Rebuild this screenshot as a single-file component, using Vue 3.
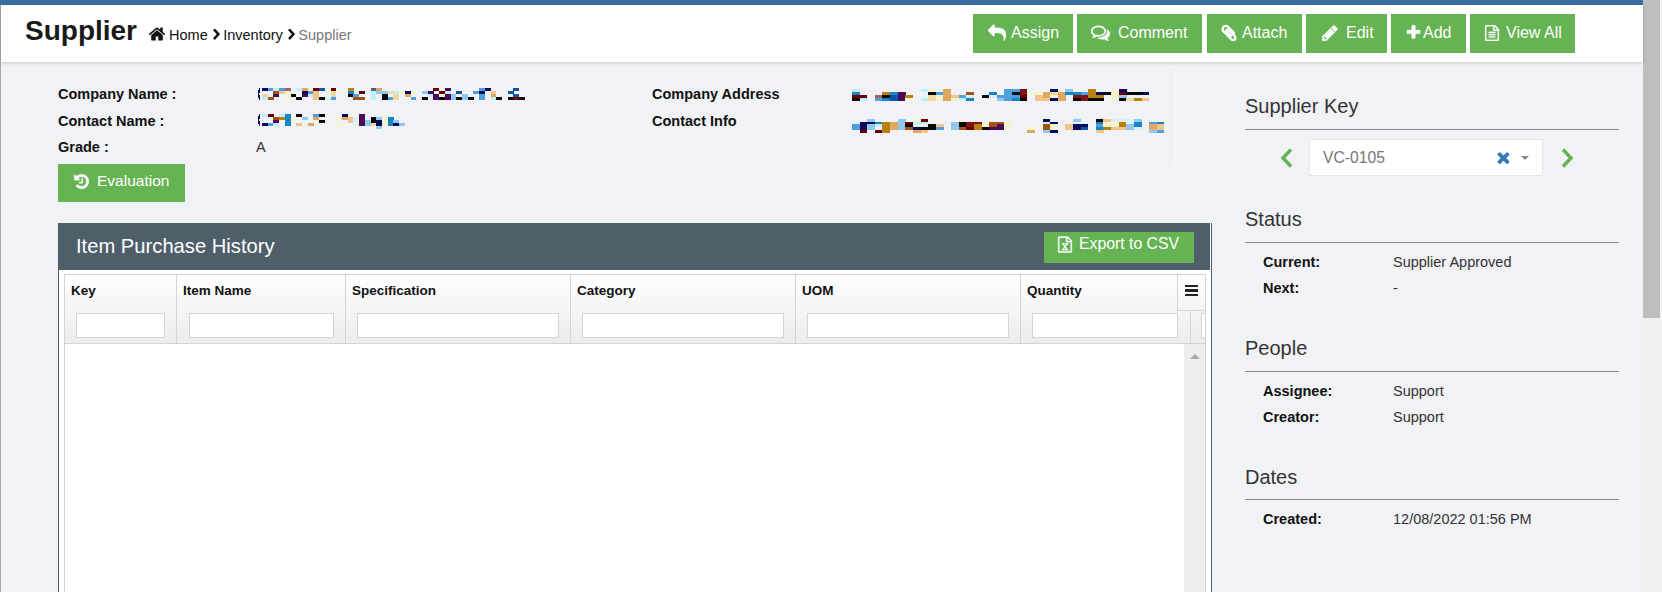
<script setup>
const palette = {
  n: '#0b0b5e', b: '#4f9fe0', c: '#bff0f5', m: '#a56060', o: '#dfa760', y: '#f3f3d0', r: '#6b0000',
  B: '#0b55aa', k: '#b8800f', v: '#5a5a8a', O: '#a5520f', f: '#f0c48a', p: '#4a0b5a', l: '#90c8f0',
  w: '#f0d8a0', t: '#1585c5', x: '#0a0a0a', R: '#7f1515', i: '#dff0f0'
}

function sp(n) { return ' '.repeat(n) }

function mosaic(rows, cw, rh, off, top) {
  const rects = []
  rows.forEach((row, ry) => {
    ;[...row].forEach((ch, cx) => {
      if (ch !== ' ') rects.push({ x: off + cx * cw, y: ry * rh, w: cw + 0.2, h: rh, fill: palette[ch] })
    })
  })
  const width = off + cw * Math.max(...rows.map(r => r.length))
  return { rects, width, height: rows.length * rh, top }
}

const companyName = mosaic([
  'nbcbm coyrB r  k   vo' + sp(9) + 'r p' + sp(5) + 'bn' + sp(4) + 'B',
  '  Ofy  nbf yw  t r cllwcyny lp rc B  bn f  B',
  'w p yx pcf  w  xb  c x w o   cpypl l  b o   B',
  'cO  y x  fxib   OO c xbw  b x pxplxlx b cx xrx'
], 40 / 7, 3, 6, 7)

const contactName = mosaic([
  'cr ct x  bx   n  p',
  '  Okty l o   yofip xlyt',
  '  p ty    x    fiplxnytl',
  'nbc t f o    y  iplwnytnl',
  sp(20) + 'l'
], 40 / 7, 3, 6, 6.5)

const companyAddress = mosaic([
  'c        cy o       bbR   n l  k  yn',
  't   ktp   xbo  O  t bxRyyowottbknxyrxxn',
  'rr mxBpk  wyofbi xibbbr foyo RRkk yl',
  'xc btBpy cwyoyct   lbtx ffno xRxx yxwkf'
], 7.62, 3, 0, 8)

const contactInfo = mosaic([
  '  l   l yr' + sp(15) + 'n' + sp(3) + 'l' + sp(2) + 'xfiiil',
  'inntkolrcc  ilxRRyOOy    cn     tyykit bt',
  'bnlckolxiixf lxRkyOpy    Oy fnn byyklt of',
  'bnl kolOnxxb lOrkxppy  y Oy fnB tkffli of',
  ' r rk   of' + sp(13) + 'o ln' + sp(5) + 'f' + sp(6) + 'lb'
], 7.62, 2.7, 0, 11.5)

const icons = {
  reply: 'M1792 1120q0 166-127 451-3 7-10.5 24t-13.5 30-13 22q-12 17-28 17-15 0-23.5-10t-8.5-25q0-9 2.5-26.5t2.5-23.5q5-68 5-123 0-101-17.5-181t-48.5-138.5-80-101-105.5-69.5-133-42.5-154-21.5-175.5-6h-224v256q0 26-19 45t-45 19-45-19l-512-512q-19-19-19-45t19-45l512-512q19-19 45-19t45 19 19 45v256h224q713 0 875 403 53 134 53 333z',
  comments: 'M704 384q-153 0-286 52t-211.5 141-78.5 191q0 82 53 158t149 132l97 56-35 84q34-20 62-39l44-31 53 10q78 14 153 14 153 0 286-52t211.5-141 78.5-191-78.5-191-211.5-141-286-52zm0-128q191 0 353.5 68.5t256.5 186.5 94 257-94 257-256.5 186.5-353.5 68.5q-86 0-176-16-124 88-278 128-36 9-86 16h-3q-11 0-20.5-8t-11.5-21q-1-3-1-6.5t.5-6.5 2-6l2.5-5 3.5-5.5 4-5 4.5-5 4-4.5q5-6 23-25t26-29.5 22.5-29 25-38.5 20.5-44q-124-72-195-177t-71-224q0-139 94-257t256.5-186.5 353.5-68.5zm822 1169q10 24 20.5 44t25 38.5 22.5 29 26 29.5 23 25q1 1 4 4.5t4.5 5 4 5 3.5 5.5l2.5 5 2 6 .5 6.5-1 6.5q-3 14-13 22t-22 7q-50-7-86-16-154-40-278-128-90 16-176 16-271 0-472-132 58 4 88 4 161 0 309-45t264-129q125-92 192-212t67-254q0-77-23-152 129 71 204 178t75 230q0 120-71 224.5t-195 176.5z',
  paperclip: 'M1596 1385q0 117-79 196t-196 79q-135 0-235-100l-777-776q-113-115-113-271 0-159 110-270t269-111q158 0 273 113l605 606q10 10 10 22 0 16-30.5 46.5t-46.5 30.5q-13 0-23-10l-606-607q-79-77-181-77-106 0-179 75t-73 181q0 105 76 181l776 777q63 63 145 63 64 0 106-42t42-106q0-82-63-145l-581-581q-26-24-60-24-29 0-48 19t-19 48q0 32 25 59l410 410q10 10 10 22 0 16-31 47t-47 31q-12 0-22-10l-410-410q-63-61-63-149 0-82 57-139t139-57q88 0 149 63l581 581q100 98 100 235z',
  pencil: 'M491 1536l91-91-235-235-91 91v107h128v128h107zm523-928q0-22-22-22-10 0-17 7l-542 542q-7 7-7 17 0 22 22 22 10 0 17-7l542-542q7-7 7-17zm-54-192l416 416-832 832h-416v-416zm683 96q0 53-37 90l-166 166-416-416 166-165q36-38 90-38 53 0 91 38l235 234q37 39 37 91z',
  plus: 'M1600 736v192q0 40-28 68t-68 28h-416v416q0 40-28 68t-68 28h-192q-40 0-68-28t-28-68v-416h-416q-40 0-68-28t-28-68v-192q0-40 28-68t68-28h416v-416q0-40 28-68t68-28h192q40 0 68 28t28 68v416h416q40 0 68 28t28 68z',
  file: 'M1596 380q28 28 48 76t20 88v1152q0 40-28 68t-68 28h-1344q-40 0-68-28t-28-68v-1600q0-40 28-68t68-28h896q40 0 88 20t76 48zm-444-244v376h376q-10-29-22-41l-313-313q-12-12-41-22zm384 1528v-1024h-416q-40 0-68-28t-28-68v-416h-768v1536h1280zm-1024-864q0-14 9-23t23-9h704q14 0 23 9t9 23v64q0 14-9 23t-23 9h-704q-14 0-23-9t-9-23v-64zm736 224q14 0 23 9t9 23v64q0 14-9 23t-23 9h-704q-14 0-23-9t-9-23v-64q0-14 9-23t23-9h704zm0 256q14 0 23 9t9 23v64q0 14-9 23t-23 9h-704q-14 0-23-9t-9-23v-64q0-14 9-23t23-9h704z',
  excel: 'M1596 380q28 28 48 76t20 88v1152q0 40-28 68t-68 28h-1344q-40 0-68-28t-28-68v-1600q0-40 28-68t68-28h896q40 0 88 20t76 48zm-444-244v376h376q-10-29-22-41l-313-313q-12-12-41-22zm384 1528v-1024h-416q-40 0-68-28t-28-68v-416h-768v1536h1280zm-979-234v106h281v-106h-75l103-161q5-7 10-16.5t7.5-13.5 3.5-4h2q1 4 5 10 2 4 4.5 7.5t6 8 6.5 8.5l107 161h-76v106h291v-106h-68l-192-273 195-282h67v-107h-279v107h74l-103 159q-4 7-10 16.5t-9 13.5l-2 3h-2q-1-4-5-10-6-11-17-23l-106-159h76v-107h-290v107h68l189 272-194 283h-68z',
  history: 'M1664 896q0 156-61 298t-164 245-245 164-298 61q-172 0-327-72.5t-264-204.5q-7-10-6.5-22.5t8.5-20.5l137-138q10-9 25-9 16 2 23 12 73 95 179 147t225 52q104 0 198.5-40.5t163.5-109.5 109.5-163.5 40.5-198.5-40.5-198.5-109.5-163.5-163.5-109.5-198.5-40.5q-98 0-188 35.5t-160 101.5l137 138q31 30 14 69-17 40-59 40h-448q-26 0-45-19t-19-45v-448q0-42 40-59 39-17 69 14l130 129q107-101 244.5-156.5t284.5-55.5q156 0 298 61t245 164 164 245 61 298zm-640-288v448q0 14-9 23t-23 9h-320q-14 0-23-9t-9-23v-64q0-14 9-23t23-9h224v-352q0-14 9-23t23-9h64q14 0 23 9t9 23z',
  home: 'M1472 992v480q0 26-19 45t-45 19h-384v-384h-256v384h-384q-26 0-45-19t-19-45v-480q0-1 .5-3t.5-3l575-474 575 474q1 2 1 6zm223-69l-62 74q-8 9-21 11h-3q-13 0-21-7l-692-577-692 577q-12 8-24 7-13-2-21-11l-62-74q-8-10-7-23.5t11-21.5l719-599q32-26 76-26t76 26l244 204v-195q0-14 9-23t23-9h192q14 0 23 9t9 23v408l219 182q10 8 11 21.5t-7 23.5z',
  chevron: 'M1363 877l-742 742q-19 19-45 19t-45-19l-166-166q-19-19-19-45t19-45l531-531-531-531q-19-19-19-45t19-45l166-166q19-19 45-19t45 19l742 742q19 19 19 45t-19 45z',
  times: 'M1490 1322q0 40-28 68l-136 136q-28 28-68 28t-68-28l-294-294-294 294q-28 28-68 28t-68-28l-136-136q-28-28-28-68t28-68l294-294-294-294q-28-28-28-68t28-68l136-136q28-28 68-28t68 28l294 294 294-294q28-28 68-28t68 28l136 136q28 28 28 68t-28 68l-294 294 294 294q28 28 28 68z'
}

const actions = [
  { label: 'Assign', icon: 'reply', size: 18, gap: 5, left: 15, width: 100, before: 0 },
  { label: 'Comment', icon: 'comments', size: 19, gap: 8, left: 14, width: 125, before: 0 },
  { label: 'Attach', icon: 'paperclip', size: 18, gap: 4, left: 13, width: 95, before: 1 },
  { label: 'Edit', icon: 'pencil', size: 18, gap: 7, left: 15, width: 81, before: 0 },
  { label: 'Add', icon: 'plus', size: 17, gap: 1, left: 14, width: 75, before: 0 },
  { label: 'View All', icon: 'file', size: 16, gap: 6, left: 14, width: 105, before: 0 }
]

const columns = [
  { label: 'Key', width: 112, input: 89, inset: 11 },
  { label: 'Item Name', width: 169, input: 145, inset: 12 },
  { label: 'Specification', width: 225, input: 202, inset: 11 },
  { label: 'Category', width: 225, input: 202, inset: 11 },
  { label: 'UOM', width: 225, input: 202, inset: 11 },
  { label: 'Quantity', width: 170, input: 146, inset: 11 },
  { label: '', width: 60, input: 40, inset: 10 }
]

const sections = [
  { title: 'Status', rows: [['Current:', 'Supplier Approved'], ['Next:', '-']] },
  { title: 'People', rows: [['Assignee:', 'Support'], ['Creator:', 'Support']] },
  { title: 'Dates', rows: [['Created:', '12/08/2022 01:56 PM']] }
]
</script>

<template>
  <div class="page">
    <div class="main">
      <div class="topbar"></div>
      <div class="below">
        <header class="header">
          <div class="crumbs">
            <h1 class="title">Supplier</h1>
            <svg class="home" viewBox="0 0 1792 1792"><path :d="icons.home" /></svg>
            <a>Home</a>
            <svg class="sep" viewBox="300 100 1100 1570" preserveAspectRatio="none"><path :d="icons.chevron" /></svg>
            <a>Inventory</a>
            <svg class="sep" viewBox="300 100 1100 1570" preserveAspectRatio="none"><path :d="icons.chevron" /></svg>
            <span class="current">Supplier</span>
          </div>
          <div class="actions">
            <button
              v-for="a in actions"
              :key="a.label"
              class="btn"
              :class="'btn-' + a.icon"
              :style="{ width: a.width + 'px', paddingLeft: a.left + 'px', gap: a.gap + 'px', marginLeft: a.before + 'px' }"
            >
              <svg :width="a.size" :height="a.size" viewBox="0 0 1792 1792"><path :d="icons[a.icon]" /></svg>
              <span>{{ a.label }}</span>
            </button>
          </div>
        </header>

        <div class="content">
          <section class="left">
            <div class="info">
              <b>Company Name :</b>
              <div>
                <svg class="mosaic" :width="companyName.width" :height="companyName.height" :style="{ marginTop: companyName.top + 'px' }">
                  <path d="M4 0.5 Q1.2 6 4 11.5" fill="none" stroke="#0b0b5e" stroke-width="1.6" />
                  <rect v-for="(r, i) in companyName.rects" :key="i" :x="r.x" :y="r.y" :width="r.w" :height="r.h" :fill="r.fill" />
                </svg>
              </div>
              <b>Company Address</b>
              <div>
                <svg class="mosaic" :width="companyAddress.width" :height="companyAddress.height" :style="{ marginTop: companyAddress.top + 'px' }">
                  <rect v-for="(r, i) in companyAddress.rects" :key="i" :x="r.x" :y="r.y" :width="r.w" :height="r.h" :fill="r.fill" />
                </svg>
              </div>
              <b>Contact Name :</b>
              <div>
                <svg class="mosaic" :width="contactName.width" :height="contactName.height" :style="{ marginTop: contactName.top + 'px' }">
                  <path d="M4 0.5 Q1.2 6 4 11.5" fill="none" stroke="#0b0b5e" stroke-width="1.6" />
                  <rect v-for="(r, i) in contactName.rects" :key="i" :x="r.x" :y="r.y" :width="r.w" :height="r.h" :fill="r.fill" />
                </svg>
              </div>
              <b>Contact Info</b>
              <div>
                <svg class="mosaic" :width="contactInfo.width" :height="contactInfo.height" :style="{ marginTop: contactInfo.top + 'px' }">
                  <rect v-for="(r, i) in contactInfo.rects" :key="i" :x="r.x" :y="r.y" :width="r.w" :height="r.h" :fill="r.fill" />
                </svg>
              </div>
              <b>Grade :</b>
              <span class="grade">A</span>
            </div>

            <button class="btn eval">
              <svg width="17" height="17" viewBox="0 0 1792 1792"><path :d="icons.history" /></svg>
              <span>Evaluation</span>
            </button>

            <div class="panel">
              <div class="panel-head">
                <span class="panel-title">Item Purchase History</span>
                <button class="btn export">
                  <svg width="16" height="17" viewBox="0 0 1792 1792"><path :d="icons.excel" /></svg>
                  <span>Export to CSV</span>
                </button>
              </div>
              <div class="panel-body">
                <div class="grid">
                  <div class="grid-head">
                    <div
                      v-for="c in columns"
                      :key="c.label"
                      class="col"
                      :style="{ width: c.width + 'px' }"
                    >
                      <div class="col-label">{{ c.label }}</div>
                      <input class="filter" :style="{ width: c.input + 'px', marginLeft: c.inset + 'px' }" />
                    </div>
                    <div class="menu">
                      <span></span><span></span><span></span>
                    </div>
                  </div>
                  <div class="grid-body">
                    <div class="vbar"><i class="arrow"></i></div>
                  </div>
                </div>
              </div>
            </div>
          </section>

          <aside class="side">
            <div class="side-title first">Supplier Key</div>
            <div class="picker">
              <svg class="nav" viewBox="0 0 13 20"><polyline points="11,1.5 3,10 11,18.5" /></svg>
              <div class="select">
                <span class="select-text">VC-0105</span>
                <svg class="clear" viewBox="250 250 1300 1300"><path :d="icons.times" /></svg>
                <i class="caret"></i>
              </div>
              <svg class="nav" viewBox="0 0 13 20"><polyline points="2,1.5 10,10 2,18.5" /></svg>
            </div>

            <div v-for="s in sections" :key="s.title" class="side-section">
              <div class="side-title">{{ s.title }}</div>
              <div class="side-rows">
                <div v-for="r in s.rows" :key="r[0]" class="side-row">
                  <b>{{ r[0] }}</b>
                  <span>{{ r[1] }}</span>
                </div>
              </div>
            </div>
          </aside>
        </div>
      </div>
    </div>
    <div class="scroll"><div class="thumb"></div></div>
  </div>
</template>

<style>
html, body { margin: 0; overflow: hidden; }
</style>

<style scoped>
.page {
  display: flex;
  height: 592px;
  overflow: hidden;
  background: #f0f2f6;
  font-family: "Liberation Sans", Arial, sans-serif;
  font-size: 14.5px;
  color: #333;
}
.main { flex: 1; min-width: 0; display: flex; flex-direction: column; }
.topbar { height: 5px; background: #3b6e9e; flex: none; }
.below { flex: 1; min-height: 0; border-left: 1px solid #a8a8a8; }

.header {
  height: 57px;
  background: #fff;
  box-shadow: 0 1px 3px rgba(0, 0, 0, 0.18);
  display: flex;
  justify-content: space-between;
  padding: 0 68px 0 24px;
  position: relative;
}
.crumbs { display: flex; align-items: baseline; color: #111; padding-top: 9px; }
.title { margin: 0 11px 0 0; font-size: 28px; line-height: 34px; font-weight: 700; color: #1a1a1a; }
.home { width: 18px; height: 18px; margin: 11px 3px 0 0; fill: #111; align-self: flex-start; }
.sep { width: 7px; height: 11px; margin: 14.5px 3.5px 0 5px; fill: #111; align-self: flex-start; }
.current { color: #777; }

.actions { display: flex; gap: 4px; padding-top: 9px; }
.btn {
  height: 39px;
  border: 0;
  background: #66b354;
  color: #fff;
  font-family: inherit;
  font-size: 16px;
  display: flex;
  align-items: center;
  padding: 0 0 2px;
}
.btn svg { fill: #fff; flex: none; }
.btn svg path { stroke: #fff; stroke-width: 40; }
.btn-paperclip svg path { stroke-width: 110; }

.content { display: flex; }
.left { width: 1154px; margin-left: 57px; flex: none; }
.info {
  margin-top: 9px;
  width: 1117px;
  box-sizing: border-box;
  padding: 10px 0 3px;
  border-right: 1px solid #fff;
  display: grid;
  grid-template-columns: 198px 396px 200px 1fr;
  grid-auto-rows: 26.5px;
  align-items: start;
}
.info b { font-size: 14.5px; color: #111; line-height: 26px; }
.mosaic { display: block; shape-rendering: crispEdges; }
.grade { line-height: 26px; color: #333; }

.eval { width: 127px; height: 38px; padding: 0 0 3px 15px; gap: 7px; font-size: 15.5px; }

.panel {
  margin-top: 21px;
  width: 1154px;
  box-sizing: border-box;
  border-left: 1px solid #4e5f6a;
  border-right: 1px solid #4e5f6a;
  background: #fff;
  height: 400px;
}
.panel-head {
  height: 47px;
  margin-right: 1px;
  background: #4e5f6a;
  display: flex;
  justify-content: space-between;
  padding: 0 16px 0 17px;
  box-sizing: border-box;
}
.panel-title { font-size: 20.2px; line-height: 47px; color: #fff; }
.export {
  width: 150px;
  height: 31px;
  margin-top: 9px;
  padding: 0 0 6px 13px;
  gap: 6px;
  font-size: 15.8px;
}

.panel-body { padding: 4px 5px 0; }
.grid { border: 1px solid #d4d4d4; border-bottom: 0; height: 340px; overflow: hidden; }
.grid-head {
  display: flex;
  height: 68px;
  position: relative;
  overflow: hidden;
  border-bottom: 1px solid #d4d4d4;
  background: linear-gradient(#fff, #ececec);
}
.col {
  flex: none;
  box-sizing: border-box;
  border-right: 1px solid #d4d4d4;
  padding-top: 6px;
}
.col:last-of-type { border-right: 0; }
.col-label {
  font-size: 13.5px;
  font-weight: 700;
  line-height: 20px;
  height: 20px;
  color: #111;
  padding-left: 6px;
}
.filter {
  display: block;
  box-sizing: border-box;
  height: 25px;
  margin-top: 12px;
  padding: 0;
  background: #fff;
  border: 1px solid #d4d4d4;
  border-radius: 0;
  outline: 0;
}
.menu {
  position: absolute;
  top: 0;
  right: 0;
  width: 28px;
  height: 36px;
  box-sizing: border-box;
  border-left: 1px solid #d4d4d4;
  border-bottom: 1px solid #d4d4d4;
  background: linear-gradient(#fff, #f4f4f4);
  display: flex;
  flex-direction: column;
  align-items: center;
  gap: 2px;
  padding-top: 10px;
}
.menu span { display: block; width: 13px; height: 2.6px; background: #222; }
.grid-body { height: 270px; display: flex; justify-content: flex-end; background: #fff; }
.vbar { width: 21px; background: #eee; display: flex; justify-content: center; padding-top: 10px; box-sizing: border-box; }
.arrow {
  display: block;
  width: 0;
  height: 0;
  border-left: 5px solid transparent;
  border-right: 5px solid transparent;
  border-bottom: 5px solid #aaa;
}

.side { width: 374px; margin-left: 33px; flex: none; padding-top: 32px; }
.side-title {
  font-size: 20px;
  line-height: 24px;
  color: #333;
  padding-bottom: 11px;
  border-bottom: 1px solid #888;
}
.picker {
  display: flex;
  align-items: center;
  height: 37px;
  margin-top: 9px;
  padding-left: 35px;
}
.nav { width: 13px; height: 20px; flex: none; fill: none; stroke: #66b354; stroke-width: 3.4; }
.select {
  width: 234px;
  height: 37px;
  box-sizing: border-box;
  margin: 0 18px 0 16px;
  background: #fff;
  border: 1px solid #e6e6e6;
  display: flex;
  align-items: center;
  padding-left: 13px;
  font-size: 15.7px;
  color: #777;
}
.select-text { flex: 1; }
.clear { width: 13px; height: 13px; fill: #337ab7; margin-right: 11px; }
.caret {
  display: block;
  width: 0;
  height: 0;
  margin-right: 13px;
  border-left: 4.5px solid transparent;
  border-right: 4.5px solid transparent;
  border-top: 4px solid #888;
}
.side-section { margin-top: 31px; }
.side-section + .side-section { margin-top: 35px; }
.side-section:last-child .side-title { padding-bottom: 10px; }
.side-rows { padding: 6px 0 0 18px; }
.side-row { display: flex; height: 26px; line-height: 26px; }
.side-row b { width: 130px; color: #111; }
.side-row span { color: #333; }

.scroll { width: 19px; flex: none; background: #f1f1f1; }
.thumb { width: 17px; height: 318px; background: #bebebe; }
</style>
